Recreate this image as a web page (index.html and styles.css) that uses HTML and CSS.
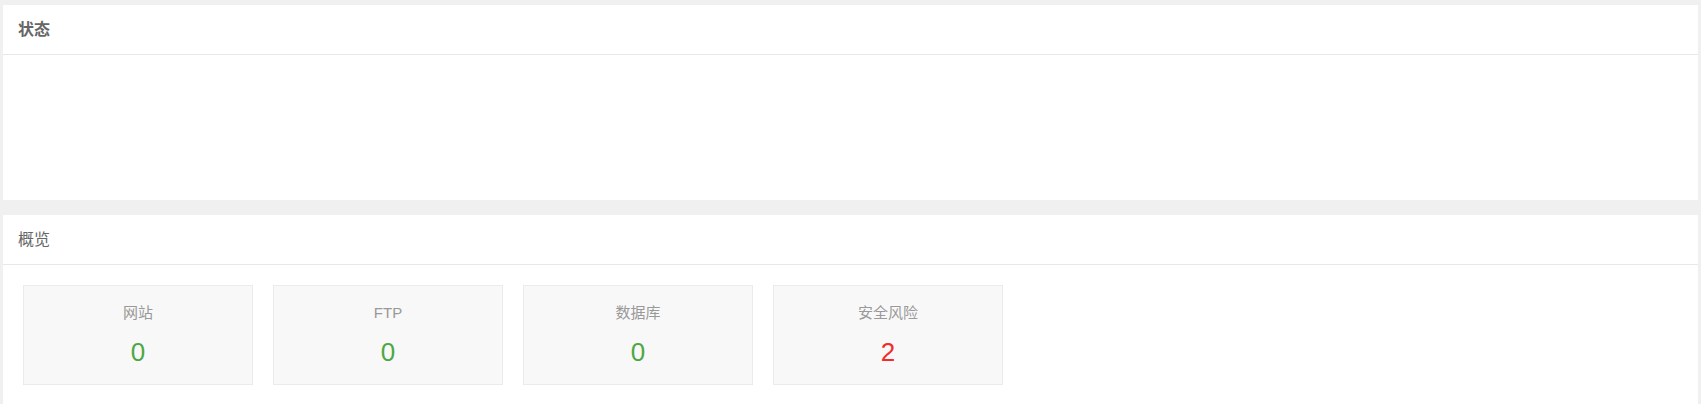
FILE: index.html
```html
<!DOCTYPE html>
<html lang="zh-CN">
<head>
    <meta charset="UTF-8">
    <meta name="viewport" content="width=device-width, initial-scale=1.0">
    <title>首页</title>
    <link rel="stylesheet" href="styles.css">
</head>
<body>

    <div class="main">
        <!-- 状态 -->
        <div class="panel">
            <div class="panel-title panel-title-bold">状态</div>
            <div class="panel-body status-body"></div>
        </div>

        <!-- 概览 -->
        <div class="panel panel-last">
            <div class="panel-title">概览</div>
            <div class="panel-body overview">
                <div class="card">
                    <div class="card-label">网站</div>
                    <div class="card-num">0</div>
                </div>
                <div class="card">
                    <div class="card-label">FTP</div>
                    <div class="card-num">0</div>
                </div>
                <div class="card">
                    <div class="card-label">数据库</div>
                    <div class="card-num">0</div>
                </div>
                <div class="card">
                    <div class="card-label">安全风险</div>
                    <div class="card-num card-num-danger">2</div>
                </div>
            </div>
        </div>
    </div>

</body>
</html>
```

FILE: styles.css
```css
body {
    font-family: 'Liberation Sans', Arial, 'Noto Sans CJK SC', sans-serif;
    background-color: #f0f0f0;
    margin: 0;
    padding: 0;
}

.main {
    display: flex;
    flex-direction: column;
    gap: 15px;
    padding: 5px 3px 0 3px;
    height: 404px;
    box-sizing: border-box;
}

.panel {
    background-color: #fff;
}

.panel-last {
    flex: 1;
}

.panel-title {
    height: 49px;
    line-height: 49px;
    padding-left: 15px;
    font-size: 16px;
    color: #666;
    border-bottom: 1px solid #e8e8e8;
}

.panel-title-bold {
    font-weight: bold;
    color: #666;
}

.status-body {
    height: 145px;
}

.overview {
    display: flex;
    gap: 20px;
    padding: 20px;
}

.card {
    width: 230px;
    height: 100px;
    box-sizing: border-box;
    padding-top: 17px;
    background-color: #f8f8f8;
    border: 1px solid #ebebeb;
    text-align: center;
}

.card-label {
    font-size: 15px;
    line-height: 20px;
    color: #999;
}

.card-num {
    margin-top: 12px;
    font-size: 26px;
    line-height: 34px;
    color: #4ca843;
}

.card-num-danger {
    color: #ef2d2a;
}
```
